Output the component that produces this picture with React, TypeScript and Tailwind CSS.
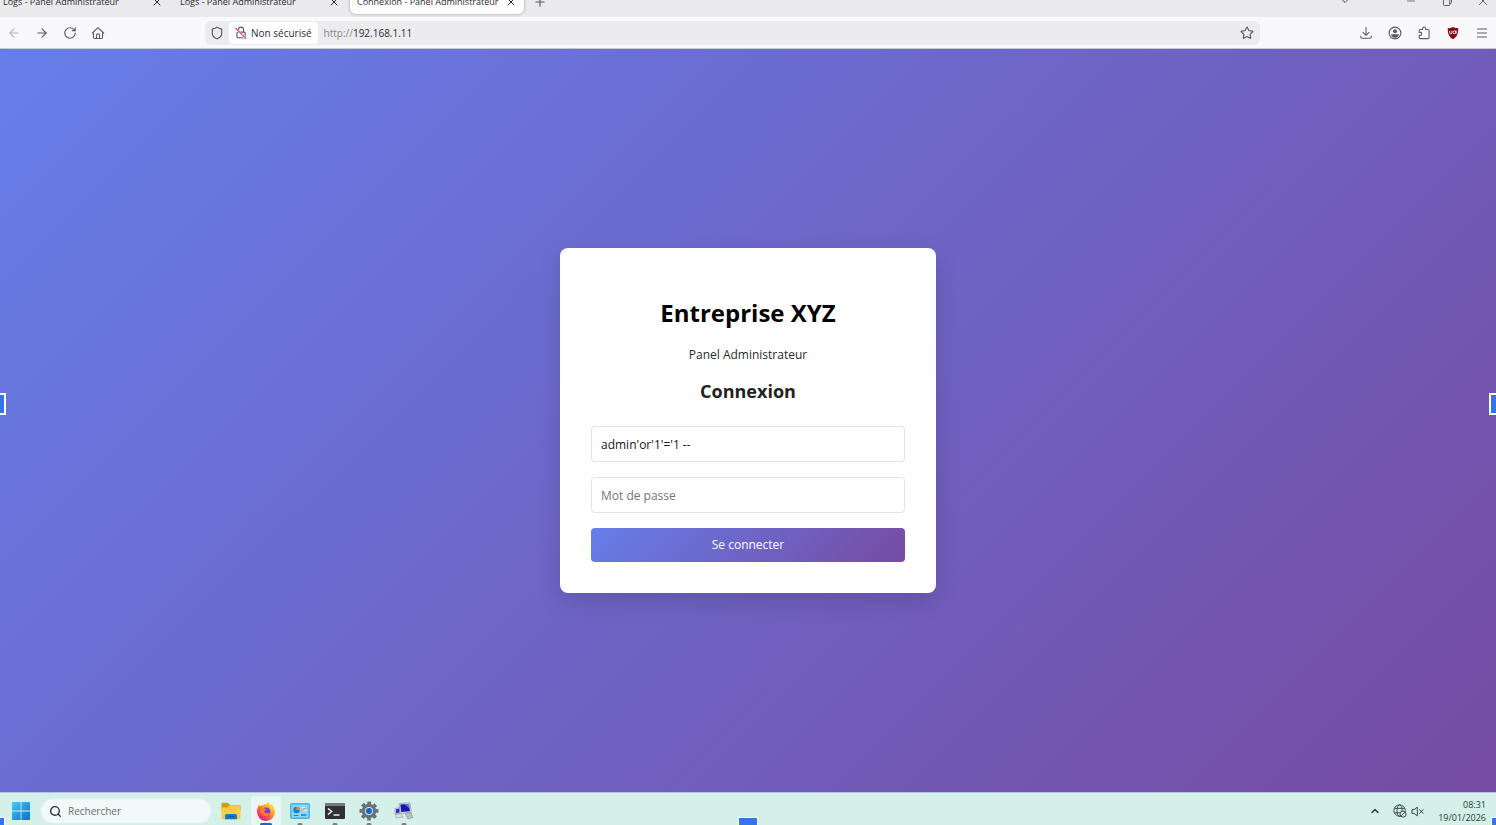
import React, { useState } from "react";
import {
  ArrowLeft,
  ArrowRight,
  ChevronDown,
  ChevronUp,
  Menu,
  Minus,
  Plus,
  RotateCw,
  Search,
  Shield,
  Star,
  X,
} from "lucide-react";

const tabs = [
  { id: 1, title: "Logs - Panel Administrateur" },
  { id: 2, title: "Logs - Panel Administrateur" },
  { id: 3, title: "Connexion - Panel Administrateur" },
];

function HomeIcon() {
  return (
    <svg viewBox="0 0 16 16" className="size-[14px]" fill="none" stroke="currentColor" strokeWidth="1.2" strokeLinejoin="round">
      <path d="M1.5 8 8 1.8 14.5 8" strokeLinecap="round" />
      <path d="M2.8 7v6.2c0 .7.4 1.1 1.1 1.1h8.2c.7 0 1.1-.4 1.1-1.1V7" />
      <path d="M6.2 14.2v-3.4a1.8 1.8 0 0 1 3.6 0v3.4" />
    </svg>
  );
}

function BrokenLockIcon() {
  return (
    <svg viewBox="0 0 14 16" className="h-[14px] w-3" fill="none" strokeWidth="1.3" strokeLinecap="round">
      <path d="M4 7V4.2a3 3 0 0 1 6 0V7" stroke="#5b5b66" />
      <rect x="2.3" y="7" width="9.6" height="6.6" rx="1.2" stroke="#5b5b66" />
      <path d="m1 3 11.5 11.2" stroke="#fff" strokeWidth="2.6" />
      <path d="m.9 2.6 11.8 11.6" stroke="#e5305f" />
    </svg>
  );
}

function DownloadIcon() {
  return (
    <svg viewBox="0 0 16 16" className="size-[14px]" fill="none" stroke="currentColor" strokeWidth="1.2" strokeLinecap="round" strokeLinejoin="round">
      <path d="M8 1.5v9M4.5 7.2 8 10.6l3.5-3.4" />
      <path d="M2 11.5v1.2c0 .9.5 1.4 1.4 1.4h9.2c.9 0 1.4-.5 1.4-1.4v-1.2" />
    </svg>
  );
}

function AccountIcon() {
  return (
    <svg viewBox="0 0 16 16" className="size-[14px]" fill="none">
      <circle cx="8" cy="8" r="6.7" stroke="currentColor" strokeWidth="1.3" />
      <circle cx="8" cy="6" r="2.3" fill="currentColor" />
      <path d="M3.6 9.3h8.8c0 2.4-2 4.2-4.4 4.2s-4.4-1.8-4.4-4.2Z" fill="currentColor" />
    </svg>
  );
}

function ExtensionsIcon() {
  return (
    <svg viewBox="0 0 16 16" className="size-[14px]" fill="none" stroke="currentColor" strokeWidth="1.2" strokeLinejoin="round">
      <path d="M2.5 5.2c0-.8.4-1.2 1.2-1.2h2.7V3a1.8 1.8 0 0 1 3.6 0v1h2.6c.8 0 1.2.4 1.2 1.2v8c0 .8-.4 1.2-1.2 1.2H3.7c-.8 0-1.2-.4-1.2-1.2v-2.5h1.3a1.7 1.7 0 0 0 0-3.4H2.5Z" />
    </svg>
  );
}

function UblockIcon() {
  return (
    <svg viewBox="0 0 16 16" className="size-[14px]">
      <path d="M8 1c2 1.1 4 1.6 6 1.6 0 5.6-.9 9.6-6 12.4C2.9 12.2 2 8.2 2 2.6 4 2.6 6 2.1 8 1Z" fill="#800a0f" />
      <path d="M4.2 5.5v2.2a1.2 1.2 0 0 0 2.4 0V5.5" fill="none" stroke="#fff" />
      <circle cx="9.6" cy="7.2" r="1.6" fill="none" stroke="#fff" />
      <path d="M11.5 5v3.9" stroke="#fff" />
    </svg>
  );
}

function WindowsLogo() {
  return (
    <svg viewBox="0 0 18 18" className="size-[18px]">
      <defs>
        <linearGradient id="win" x1="0" y1="0" x2="1" y2="1">
          <stop offset="0" stopColor="#4cc9f7" />
          <stop offset="1" stopColor="#0470cf" />
        </linearGradient>
      </defs>
      <path d="M0 .7Q0 0 .7 0h7.900v8.600H0ZM9.400 0h7.900q.7 0 .7.700v7.900H9.400ZM0 9.400h8.600V18H.7q-.7 0-.7-.7ZM9.400 9.400H18v7.900q0 .7-.7.700H9.400Z" fill="url(#win)" />
    </svg>
  );
}

function FolderIcon() {
  return (
    <svg viewBox="0 0 20 18" className="h-[18px] w-5">
      <path d="M.5 2Q.5.7 1.8.7h5L9 3h9.200q1.300 0 1.300 1.300V9H.5Z" fill="#d99a13" />
      <path d="M.5 5.500h6.300L9 3.300h9.200q1.300 0 1.300 1.300V16q0 1.300-1.300 1.300H1.800Q.5 17.300.5 16Z" fill="#fdcb45" />
      <path d="M4 17.300v-3.800q0-1.500 1.500-1.500h9q1.500 0 1.500 1.500v3.800Z" fill="#137bc9" />
      <path d="M6.500 14.700h7" stroke="#0a5ca5" />
    </svg>
  );
}

function FirefoxIcon() {
  return (
    <svg viewBox="0 0 20 20" className="size-5">
      <defs>
        <linearGradient id="ffx" x1=".85" y1=".1" x2=".2" y2=".95">
          <stop offset="0" stopColor="#ffe23f" />
          <stop offset=".4" stopColor="#ff9a1f" />
          <stop offset=".75" stopColor="#ff4250" />
          <stop offset="1" stopColor="#e3167d" />
        </linearGradient>
      </defs>
      <path d="M12.200 1c1 1.200 1.400 2.100 2.200 3 .7-.1 1-.5.9-1.100 2.400 2 3.700 4.800 3.700 7.900a9 9 0 0 1-18 .3C.9 8.200 1.800 5.500 3.200 3.300c.1 1 .4 1.600.8 2.100.8-1 1.700-1.200 3-1.100C8 3 10.500 3.600 12.200 1Z" fill="url(#ffx)" />
      <circle cx="10" cy="11" r="4.500" fill="#7a3bdc" />
      <path d="M4.600 7.500c2.300-1.300 3.600.2 5.600.3.600.7-.1 1.400-1.500 1.700-.5 1.200-.3 2.400 1.400 2.800 1.600.3 2.700-.9 4-.4-.8 2.600-3.100 3.800-5.500 3.200-3.100-.8-4.800-4-4-7.600Z" fill="#ff7a2b" />
      <path d="M11 3.500c2.900 1.300 4.900 4.200 4.500 7.900 1.800-2.800 1-5.800-1.300-7.600C13.300 3 12.700 2.200 12.200 1c-.3 1-.7 1.800-1.200 2.500Z" fill="#ffd23c" />
    </svg>
  );
}

function ControlPanelIcon() {
  return (
    <svg viewBox="0 0 20 16" className="h-4 w-5">
      <rect x=".5" y=".5" width="19" height="15" rx="1" fill="#5fc3f0" stroke="#4eb4e6" />
      <rect x="2" y="2" width="16" height="12" fill="#8dd8f8" />
      <circle cx="6.5" cy="7" r="3.3" fill="#1a80cf" />
      <path d="M6.5 7V3.700A3.300 3.300 0 0 1 9.800 7Z" fill="#f58a24" />
      <path d="M12 4.500h4.500M12 7.500h4.500" stroke="#fff" strokeWidth="1.2" />
      <path d="M11.500 8.500 14 6l2.500-2" stroke="#ef8220" fill="none" />
      <path d="M3.500 12.500h5" stroke="#1a80cf" />
      <path d="M11 12h5.500" stroke="#1a80cf" strokeWidth="1.5" />
    </svg>
  );
}

function TerminalIcon() {
  return (
    <svg viewBox="0 0 20 16" className="h-4 w-5">
      <rect width="20" height="16" rx="1" fill="#303134" />
      <path d="M0 1q0-1 1-1h18q1 0 1 1v2H0Z" fill="#777a7e" />
      <path d="m3 5.500 3.700 3L3 11.500" fill="none" stroke="#fff" strokeWidth="1.4" />
      <path d="M8.500 12h6" stroke="#fff" strokeWidth="1.4" />
    </svg>
  );
}

function SettingsIcon() {
  return (
    <svg viewBox="0 0 20 20" className="size-5">
      <circle cx="10" cy="10" r="8" fill="none" stroke="#68727c" strokeWidth="3" strokeDasharray="3.600 2.683" transform="rotate(-13 10 10)" />
      <circle cx="10" cy="10" r="5.3" fill="none" stroke="#68727c" strokeWidth="4" />
      <circle cx="10" cy="10" r="4" fill="#d5e7f2" />
      <circle cx="10" cy="10" r="3" fill="#1267b8" />
    </svg>
  );
}

function RemoteIcon() {
  return (
    <svg viewBox="0 0 20 18" className="h-[18px] w-5">
      <path d="m1 6.500 5-1v6l-5 1Z" fill="#cbd0d7" stroke="#88919b" strokeWidth=".6" />
      <path d="m2 7.300 3.500-.7v4l-3.500.7Z" fill="#2630c6" />
      <path d="m5 1.500 11-.7 1.300 9.700-11 1Z" fill="#d5d8df" stroke="#89909b" strokeWidth=".6" />
      <path d="m6.300 2.500 8.600-.5 1 7.300-8.600.8Z" fill="#1717b8" />
      <path d="m10.500 2.300 4.400-.3.600 4.500Z" fill="#6972ed" />
      <path d="m1.500 12.500 6-.8 1.500 3.300-6.500 1Z" fill="#dce1e7" stroke="#929aa5" strokeWidth=".6" />
      <path d="m11 11.500 6-.8 2 4.800-5 1.500Z" fill="#b9c0c9" stroke="#848c97" strokeWidth=".6" />
    </svg>
  );
}

function NetworkOffIcon() {
  return (
    <svg viewBox="0 0 16 16" className="size-[14px]" fill="none" stroke="#2e3a38">
      <circle cx="7.5" cy="7.5" r="6.5" />
      <ellipse cx="7.5" cy="7.5" rx="3" ry="6.5" />
      <path d="M1.500 5h12M1.500 10h7" />
      <circle cx="11.5" cy="11.5" r="3.5" fill="#d4f0e8" />
      <path d="m9 14 5-5" />
    </svg>
  );
}

function MutedIcon() {
  return (
    <svg viewBox="0 0 14 14" className="size-[13px]" fill="none" stroke="#2e3a38" strokeLinejoin="round">
      <path d="M1 5h2.300L6.800 2.300v9.400L3.300 9H1Z" />
      <path d="m9.300 5 3.700 4M13 5l-3.700 4" strokeLinecap="round" />
    </svg>
  );
}

const apps = [
  { name: "Explorateur de fichiers", icon: FolderIcon, running: false },
  { name: "Firefox", icon: FirefoxIcon, running: true, active: true },
  { name: "Panneau de configuration", icon: ControlPanelIcon, running: true },
  { name: "Terminal", icon: TerminalIcon, running: true },
  { name: "Paramètres", icon: SettingsIcon, running: true },
  { name: "Bureau à distance", icon: RemoteIcon, running: true },
];

function TabStrip() {
  const [active, setActive] = useState(3);

  return (
    <div className="flex h-[17px] shrink-0 items-end justify-between overflow-hidden bg-[#eaeaec] pb-[3px] text-[#2b2b33]">
      <div className="-ml-1 flex items-center gap-[3px]">
        {tabs.map((tab) => (
          <div
            key={tab.id}
            className={[
              "flex h-6 w-[174px] items-center justify-between rounded-md px-[7px]",
              active === tab.id ? "bg-white shadow-[0_0_3px_rgba(0,0,0,0.35)]" : "",
            ].join(" ")}
          >
            <button className="text-[9px] leading-4 whitespace-nowrap" onClick={() => setActive(tab.id)}>
              {tab.title}
            </button>
            <button aria-label="Fermer l'onglet">
              <X className="size-3" strokeWidth={2} />
            </button>
          </div>
        ))}
        <button className="ml-[6px] text-[#5b5b66]" aria-label="Nouvel onglet">
          <Plus className="size-[14px]" strokeWidth={2} />
        </button>
      </div>
      <div className="-mr-[5px] flex h-[26px] items-center text-[#4b4b55]">
        <button className="mr-[30px] flex w-9 justify-center" aria-label="Lister les onglets">
          <ChevronDown className="size-3" />
        </button>
        <button className="flex w-9 justify-center" aria-label="Réduire">
          <Minus className="size-3" strokeWidth={1.5} />
        </button>
        <button className="flex w-9 justify-center" aria-label="Restaurer">
          <svg viewBox="0 0 10 10" className="size-[9px]" fill="none" stroke="currentColor">
            <path d="M3 2.500V1.500Q3 .5 4 .5h4Q9.500.5 9.500 2v4Q9.500 7 8.500 7h-1" />
            <rect x=".5" y="2.5" width="7" height="7" rx="1" />
          </svg>
        </button>
        <button className="flex w-9 justify-center" aria-label="Fermer">
          <X className="size-[14px]" strokeWidth={1.5} />
        </button>
      </div>
    </div>
  );
}

function Toolbar() {
  return (
    <div className="flex h-8 shrink-0 items-center border-b border-[#c9c9d6] bg-[#f9f9fb] pt-px text-[#5b5b66]">
      <div className="flex shrink-0">
        <button className="flex w-7 justify-center text-[#b5b5ba]" aria-label="Précédent">
          <ArrowLeft className="size-[14px]" />
        </button>
        <button className="flex w-7 justify-center" aria-label="Suivant">
          <ArrowRight className="size-[14px]" />
        </button>
        <button className="flex w-7 justify-center" aria-label="Actualiser">
          <RotateCw className="size-[14px]" />
        </button>
        <button className="flex w-7 justify-center" aria-label="Accueil">
          <HomeIcon />
        </button>
      </div>

      <div className="mr-[91px] ml-[93px] flex h-6 min-w-0 flex-1 items-center rounded-md bg-[#ececee] pr-[6px]">
        <button className="flex w-6 shrink-0 justify-center" aria-label="Protection">
          <Shield className="size-[14px]" />
        </button>
        <button className="flex h-[22px] shrink-0 items-center gap-1 rounded-sm bg-white px-[6px] text-[10px] font-medium text-[#2b2b33]">
          <BrokenLockIcon />
          Non sécurisé
        </button>
        <a href="#" className="ml-[6px] flex-1 text-[10px] font-medium text-[#85858c]">
          http://<span className="text-[#2b2b33]">192.168.1.11</span>
        </a>
        <button aria-label="Marquer cette page">
          <Star className="size-[14px]" />
        </button>
      </div>

      <div className="flex shrink-0">
        <button className="flex w-[29px] justify-center" aria-label="Téléchargements">
          <DownloadIcon />
        </button>
        <button className="flex w-[29px] justify-center" aria-label="Compte">
          <AccountIcon />
        </button>
        <button className="flex w-[29px] justify-center" aria-label="Extensions">
          <ExtensionsIcon />
        </button>
        <button className="flex w-[29px] justify-center" aria-label="uBlock Origin">
          <UblockIcon />
        </button>
        <button className="flex w-[29px] justify-center" aria-label="Menu">
          <Menu className="size-[14px]" strokeWidth={1.8} />
        </button>
      </div>
    </div>
  );
}

function LoginCard() {
  const [login, setLogin] = useState("admin'or'1'='1 --");
  const [password, setPassword] = useState("");

  const inputClass =
    "h-9 w-full rounded-sm border border-[#e4e4e4] bg-white px-[9px] text-xs text-[#161616] outline-none placeholder:text-[#757575]";

  return (
    <form
      className="w-[376px] rounded-lg bg-white px-[31px] pt-[47px] pb-[31px] text-center shadow-[0_8px_24px_rgba(0,0,0,0.14)]"
      onSubmit={(e) => e.preventDefault()}
    >
      <h1 className="text-2xl leading-9 font-bold text-black">Entreprise XYZ</h1>
      <p className="mt-[14px] text-xs leading-5 text-[#2b2b2b]">Panel Administrateur</p>
      <h2 className="mt-3 text-lg leading-7 font-bold text-[#222]">Connexion</h2>
      <div className="mt-[21px] flex flex-col gap-[15px]">
        <input
          aria-label="Identifiant"
          className={inputClass}
          value={login}
          spellCheck={false}
          onChange={(e) => setLogin(e.target.value)}
        />
        <input
          type="password"
          aria-label="Mot de passe"
          placeholder="Mot de passe"
          className={inputClass}
          value={password}
          onChange={(e) => setPassword(e.target.value)}
        />
        <button
          type="submit"
          className="h-[34px] rounded-sm bg-[linear-gradient(135deg,#667eea_0%,#764ba2_100%)] text-xs text-white"
        >
          Se connecter
        </button>
      </div>
    </form>
  );
}

function Taskbar() {
  return (
    <footer className="h-[33px] shrink-0 overflow-hidden border-t border-[#b9c4dc] bg-[#d4f0e8]">
      <div className="flex h-9 items-center pr-[10px] pl-3">
        <button aria-label="Démarrer">
          <WindowsLogo />
        </button>
        <label className="ml-[10px] flex h-[26px] w-[172px] items-center gap-[6px] rounded-full border border-[#dfeeea] bg-[#f1faf8] px-2 text-[#2f3437]">
          <Search className="size-[13px] shrink-0" strokeWidth={2.6} />
          <input
            aria-label="Rechercher"
            placeholder="Rechercher"
            className="w-full min-w-0 bg-transparent text-[10px] outline-none placeholder:text-[#66706e]"
          />
        </label>

        <div className="ml-1 flex w-[203px] justify-between">
          {apps.map((app) => (
            <button
              key={app.name}
              aria-label={app.name}
              className={[
                "relative flex size-[30px] items-center justify-center rounded-sm",
                app.active ? "bg-[#e9f7f4]" : "",
              ].join(" ")}
            >
              <app.icon />
              {app.running && (
                <span
                  className={[
                    "absolute top-[27px] left-1/2 h-[3px] -translate-x-1/2 rounded-full",
                    app.active ? "w-3 bg-[#0f6cc4]" : "w-[5px] bg-[#76827f]",
                  ].join(" ")}
                />
              )}
            </button>
          ))}
        </div>

        <div className="ml-auto flex items-center">
          <button className="mr-3" aria-label="Icônes cachées">
            <ChevronUp className="size-3 text-[#2e3a38]" strokeWidth={3} />
          </button>
          <button className="flex items-center gap-1" aria-label="Réseau et son">
            <NetworkOffIcon />
            <MutedIcon />
          </button>
          <div className="ml-[14px] text-right text-[9px] leading-[13px] text-[#2e3a38]">
            <div>08:31</div>
            <div>19/01/2026</div>
          </div>
        </div>
      </div>
    </footer>
  );
}

// Selection handles that sit on the edges of the window
function Handles() {
  return (
    <div className="pointer-events-none absolute inset-0" aria-hidden="true">
      <span className="absolute top-[393px] left-0 h-[22px] w-[6px] border-2 border-l-0 border-white bg-[#3475ea]" />
      <span className="absolute top-[393px] right-0 h-[22px] w-[7px] border-2 border-r-0 border-white bg-[#3475ea]" />
      <span className="absolute bottom-0 left-0 h-2 w-[5px] border-t border-r border-white bg-[#3475ea]" />
      <span className="absolute right-0 bottom-0 h-2 w-[5px] border-t border-l border-white bg-[#3475ea]" />
      <span className="absolute bottom-0 left-1/2 h-2 w-5 -translate-x-1/2 border border-b-0 border-white bg-[#3475ea]" />
    </div>
  );
}

export default function App() {
  return (
    <div className="relative flex h-screen flex-col overflow-hidden font-['Open_Sans',sans-serif]">
      <TabStrip />
      <Toolbar />
      <main className="flex flex-1 items-center justify-center bg-[linear-gradient(135deg,#667eea_0%,#764ba2_100%)]">
        <LoginCard />
      </main>
      <Taskbar />
      <Handles />
    </div>
  );
}
